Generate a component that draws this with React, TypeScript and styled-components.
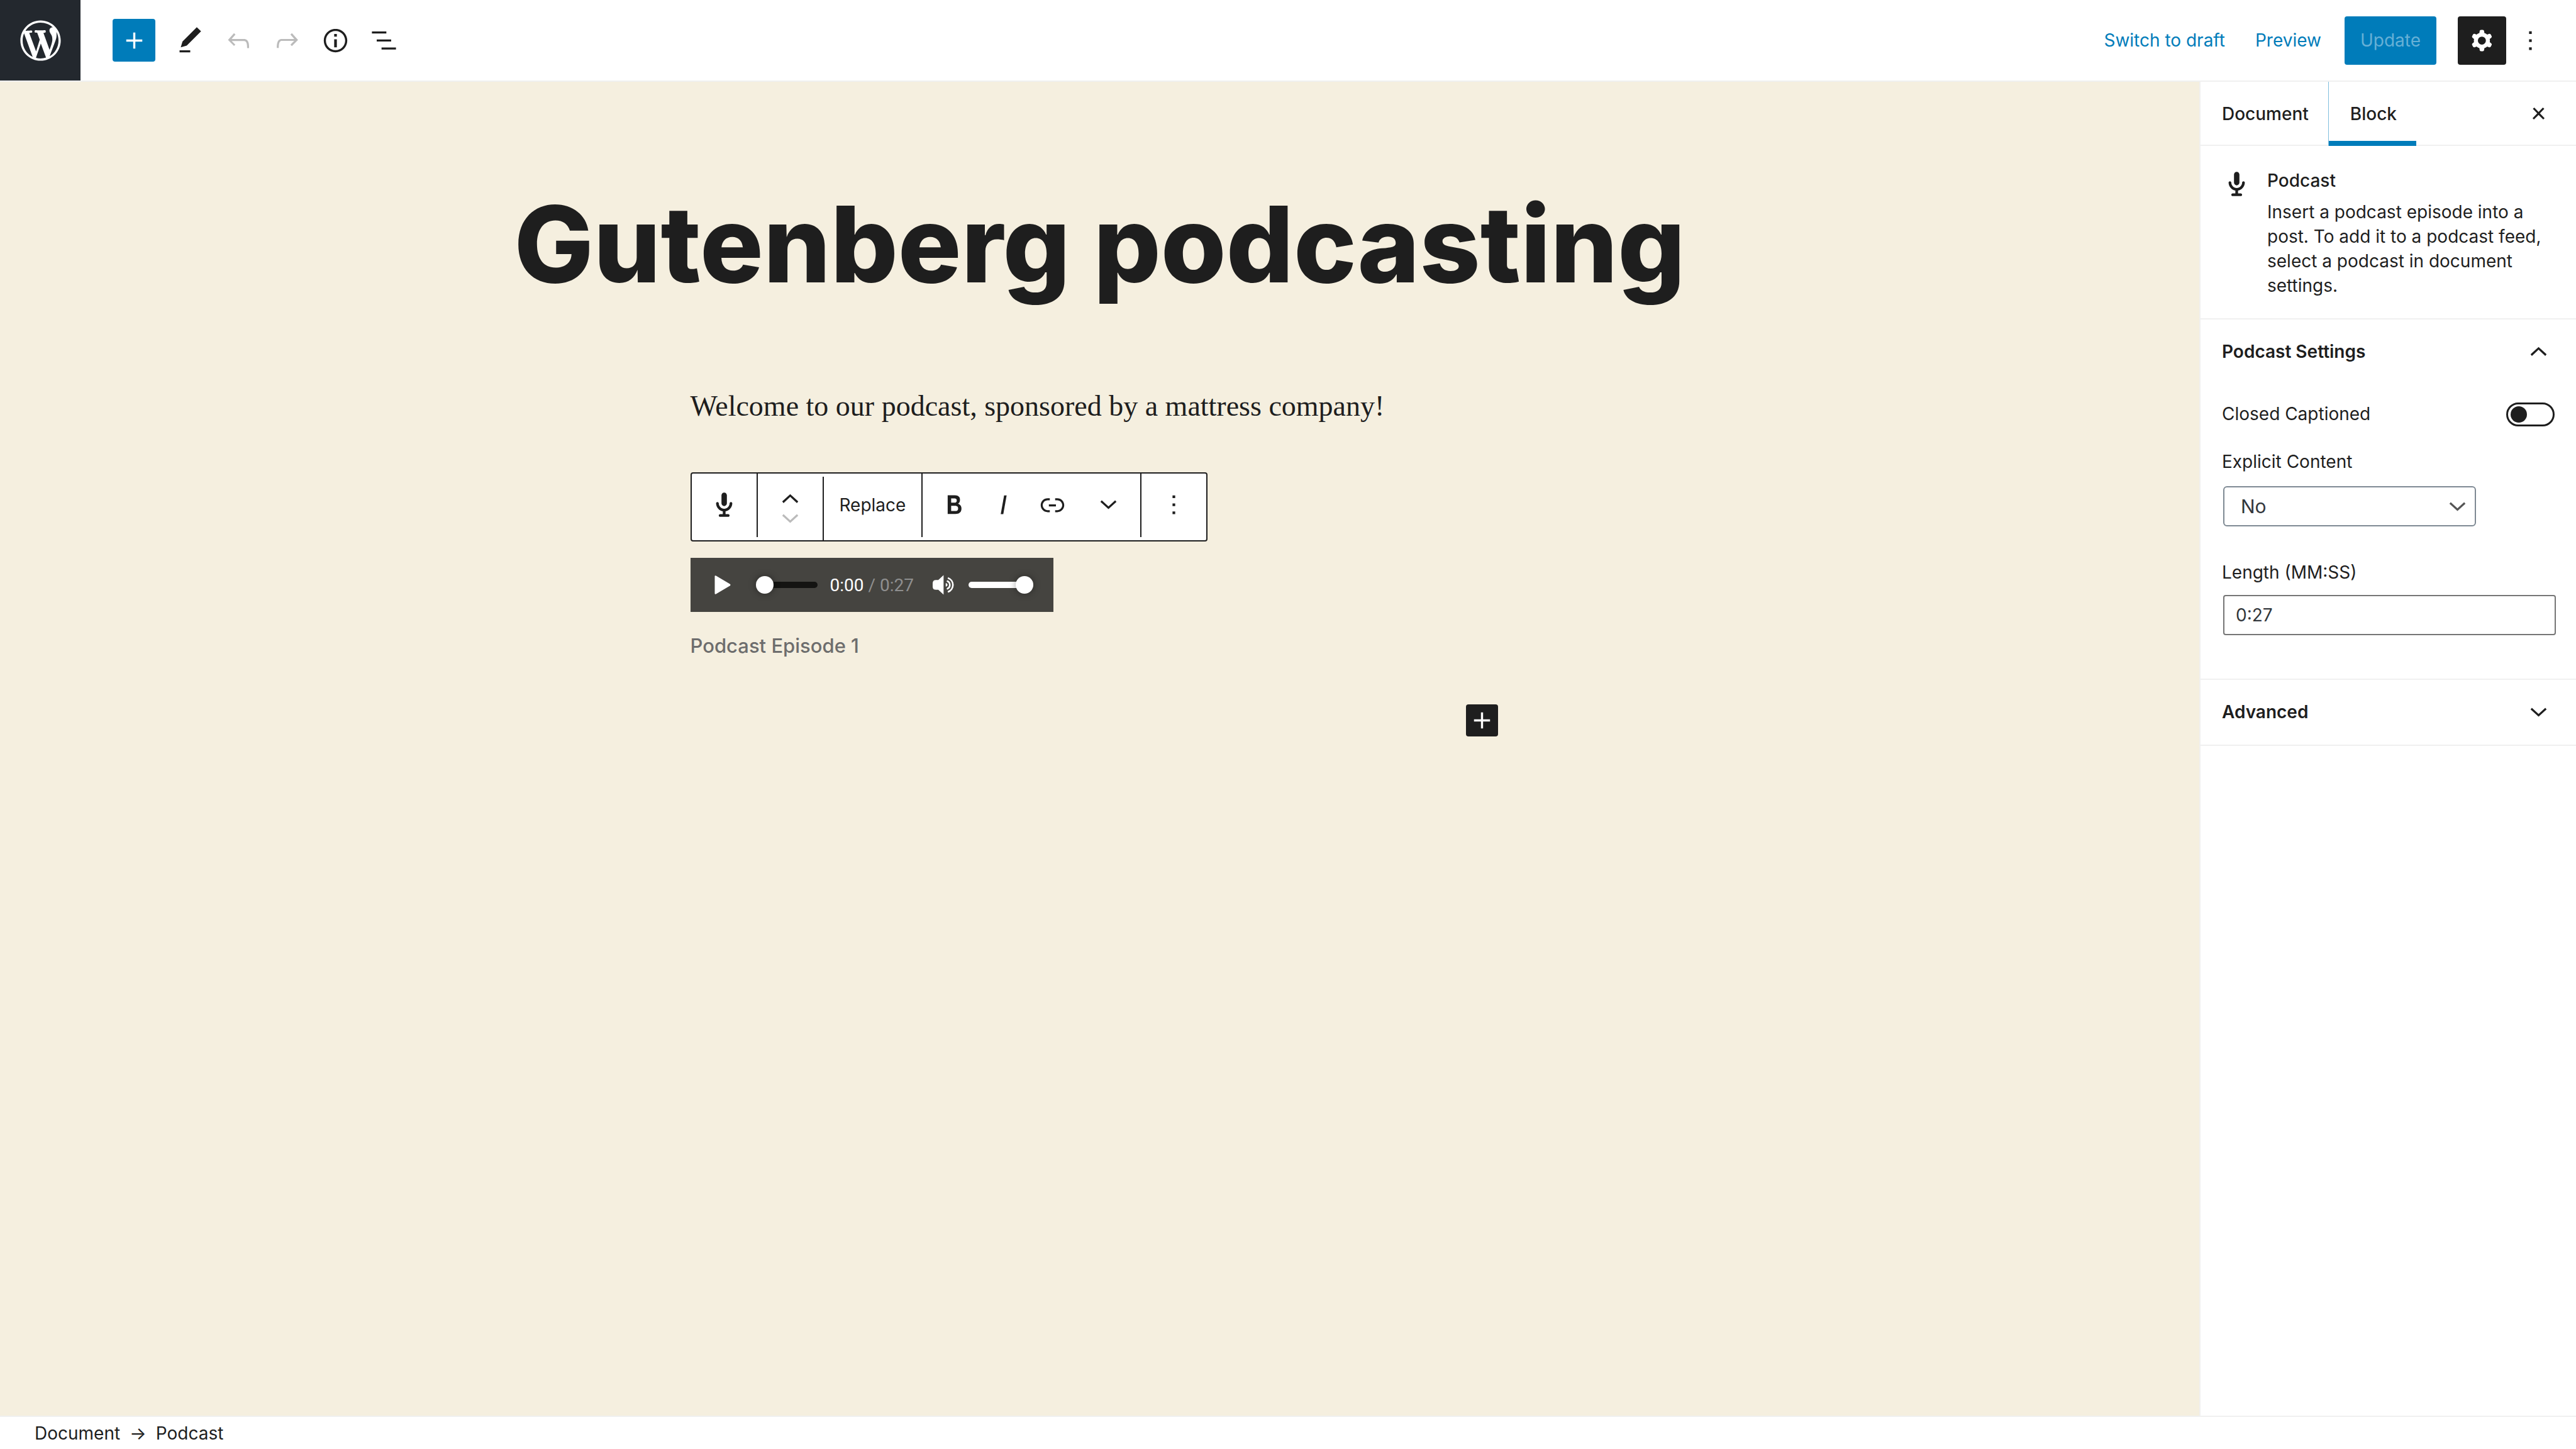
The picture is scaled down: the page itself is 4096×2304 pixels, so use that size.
import React, { useState } from 'react';
import styled, { createGlobalStyle, css } from 'styled-components';

const ink = '#1e1e1e';
const blue = '#007cba';
const line = '#f0f0f0';

const Global = createGlobalStyle`
  *, *::before, *::after { box-sizing: border-box; }
  html, body, #root { height: 100%; }
  body { margin: 0; background: #fff; }
  body, button, input, select {
    font-family: Inter, 'Liberation Sans', sans-serif;
    font-size: 28px;
    line-height: 39px;
    color: ${ink};
  }
  button { border: 0; padding: 0; background: none; cursor: pointer; }
  h1, h2, h3, p, figure { margin: 0; }
`;

const Shell = styled.div`
  display: grid;
  grid-template-rows: auto 1fr auto;
  min-height: 100vh;
`;

const Icon = styled.svg<{ $size?: number }>`
  display: block;
  flex: none;
  width: ${p => p.$size ?? 51}px;
  height: ${p => p.$size ?? 51}px;
  fill: currentColor;
`;

/* Header */
const Header = styled.header`
  display: flex;
  align-items: center;
  justify-content: space-between;
  height: 130px;
  border-bottom: 2px solid ${line};
`;

const HeaderTools = styled.div`
  display: flex;
  align-items: center;
  height: 100%;
`;

const HomeLink = styled.a`
  display: grid;
  place-items: center;
  width: 128px;
  height: 128px;
  margin-right: 51px;
  background: #23282e;
  color: #fff;
`;

const InsertButton = styled.button`
  display: grid;
  place-items: center;
  width: 68px;
  height: 68px;
  margin-right: 17px;
  border-radius: 4px;
  background: ${blue};
  color: #fff;
`;

const ToolButton = styled.button`
  display: grid;
  place-items: center;
  width: 77px;
  height: 77px;
  color: ${ink};
  &:disabled { color: #bbb; }
`;

const HeaderActions = styled.div`
  display: flex;
  align-items: center;
  padding-right: 47px;
`;

const TextButton = styled.button`
  padding: 0 24px;
  color: ${blue};
`;

const UpdateButton = styled.button`
  height: 77px;
  margin: 0 34px 0 13px;
  padding: 0 25px;
  border-radius: 4px;
  background: ${blue};
  &:disabled { color: #66b0d6; }
`;

const SettingsButton = styled(ToolButton)`
  margin-right: 13px;
  border-radius: 4px;
  background: ${ink};
  color: #fff;
`;

const MoreButton = styled.button`
  display: grid;
  place-items: center;
`;

/* Canvas */
const Body = styled.div`
  display: grid;
  grid-template-columns: 1fr 599px;
`;

const Canvas = styled.main`
  background: #f5efdf;
  padding-top: 146px;
`;

const Title = styled.h1`
  font-size: 168px;
  font-weight: 800;
  line-height: 224px;
  text-align: center;
`;

const Column = styled.div`
  display: flex;
  flex-direction: column;
  align-items: flex-start;
  width: 1302px;
  max-width: 100%;
  margin: 106px auto 0;
`;

const Paragraph = styled.p`
  font-family: 'Liberation Serif', serif;
  font-size: 46px;
  line-height: 80px;
  margin-bottom: 65px;
`;

const BlockToolbar = styled.div`
  display: flex;
  height: 110px;
  margin-bottom: 26px;
  border: 2px solid ${ink};
  border-radius: 4px;
  background: #fff;
`;

const Group = styled.div<{ $low?: boolean; $last?: boolean; $inset?: boolean }>`
  display: flex;
  height: 101px;
  padding-left: ${p => (p.$inset ? 11 : 0)}px;
  border-right: ${p => (p.$last ? 0 : 2)}px solid ${ink};
  ${p => p.$low && css`align-self: flex-end;`}
`;

const BlockButton = styled.button<{ $width: number }>`
  display: grid;
  place-items: center;
  width: ${p => p.$width}px;
  height: 98px;
`;

const ReplaceButton = styled.button`
  height: 100px;
  padding: 0 25px;
`;

const Movers = styled.div`
  display: flex;
  flex-direction: column;
  justify-content: center;
  width: 103px;
`;

const Mover = styled.button`
  display: flex;
  align-items: center;
  justify-content: center;
  height: 31px;
  &:disabled { color: #bbb; }
`;

const Player = styled.div`
  display: flex;
  align-items: center;
  width: 577px;
  height: 86px;
  margin-bottom: 34px;
  padding: 0 32px 0 36px;
  background: #454440;
  color: #fff;
`;

const PlayButton = styled.button`
  color: #fff;
  margin-right: 38px;
`;

const Slider = styled.input<{ $width: number; $track: string }>`
  appearance: none;
  width: ${p => p.$width}px;
  height: 28px;
  margin: 0;
  background: none;
  &::-webkit-slider-runnable-track {
    height: 10px;
    border-radius: 5px;
    background: ${p => p.$track};
  }
  &::-webkit-slider-thumb {
    appearance: none;
    width: 28px;
    height: 28px;
    margin-top: -9px;
    border-radius: 50%;
    background: #fff;
    box-shadow: 0 0 12px rgba(0, 0, 0, 0.4);
  }
`;

const Time = styled.span`
  flex: 1;
  margin-left: 20px;
  font-family: Roboto, sans-serif;
  white-space: nowrap;
`;

const Remaining = styled.span`
  color: #8f8f8f;
`;

const MuteButton = styled.button`
  margin-right: 23px;
  color: #fff;
`;

const Wave = styled.path`
  fill: none;
  stroke: currentColor;
  stroke-width: 15;
`;

const Caption = styled.p`
  font-size: 31px;
  font-weight: 500;
  line-height: 40px;
  color: #6d6d6d;
`;

const Appender = styled.button`
  display: grid;
  place-items: center;
  align-self: flex-end;
  width: 51px;
  height: 51px;
  margin: 73px 18px 0 0;
  border-radius: 4px;
  background: ${ink};
  color: #fff;
`;

/* Sidebar */
const Sidebar = styled.aside`
  border-left: 2px solid ${line};
  background: #fff;
`;

const Tabs = styled.div`
  display: flex;
  height: 102px;
  border-bottom: 2px solid ${line};
`;

const Tab = styled.button<{ $active?: boolean }>`
  height: 102px;
  padding: 0 31px 0 34px;
  font-weight: 500;
  ${p => p.$active && css`
    border-left: 1px solid #80bedd;
    box-shadow: inset 0 -8px ${blue};
  `}
`;

const CloseButton = styled.button`
  margin: 0 34px 0 auto;
`;

const Card = styled.section`
  display: flex;
  gap: 27px;
  height: 276px;
  padding: 35px 34px 0 36px;
  border-bottom: 2px solid ${line};
`;

const CardIcon = styled.span`
  padding-top: 4px;
`;

const CardTitle = styled.h2`
  font-size: 28px;
  font-weight: 500;
  line-height: 40px;
  margin-bottom: 11px;
`;

const Panel = styled.section<{ $open?: boolean }>`
  height: ${p => (p.$open ? 573 : 105)}px;
  border-bottom: 2px solid ${line};
`;

const PanelToggle = styled.button`
  display: flex;
  align-items: center;
  justify-content: space-between;
  width: 100%;
  height: 103px;
  padding: 0 34px;
  font-weight: 600;
`;

const Field = styled.div`
  display: flex;
  flex-direction: column;
  padding: 0 32px 0 34px;
`;

const ToggleRow = styled.div`
  display: flex;
  align-items: center;
  justify-content: space-between;
  margin: 28px 34px 37px;
`;

const Switch = styled.input`
  appearance: none;
  display: flex;
  align-items: center;
  width: 77px;
  height: 38px;
  margin: 0;
  padding: 0 4px;
  border: 3px solid ${ink};
  border-radius: 19px;
  background: #fff;
  &::before {
    content: '';
    width: 26px;
    height: 26px;
    border-radius: 50%;
    background: ${ink};
  }
  &:checked { justify-content: flex-end; }
`;

const SelectBox = styled.div`
  display: grid;
  align-items: center;
  width: 402px;
  margin: 19px 0 54px 2px;
  > * { grid-area: 1 / 1; }
  > svg { justify-self: end; margin-right: 4px; color: #555; pointer-events: none; }
`;

const Select = styled.select`
  appearance: none;
  height: 64px;
  padding: 0 28px 0 26px;
  border: 2px solid #7e8993;
  border-radius: 6px;
  background: #fff;
  font-size: 30px;
  color: #32373c;
`;

const TextInput = styled.input`
  height: 64px;
  margin: 16px 0 0 2px;
  padding: 0 18px;
  border: 2px solid #757575;
  border-radius: 4px;
  font-size: 28px;
  color: #32373c;
`;

/* Footer */
const Footer = styled.nav`
  display: flex;
  align-items: center;
  gap: 15px;
  height: 53px;
  padding: 1px 55px 0;
  border-top: 2px solid ${line};
`;

const paths = {
  plus: 'M18 11.2h-5.2V6h-1.6v5.2H6v1.6h5.2V18h1.6v-5.2H18z',
  edit: 'M20.1 5.1L16.9 2 6.2 12.7l-1.3 4.4 4.5-1.3L20.1 5.1zM4 20.8h8v-1.5H4v1.5z',
  undo: 'M18.3 11.7c-.6-.6-1.4-.9-2.3-.9H6.7l2.9-3.3-1.1-1-4.5 5L8.5 16l1-1-2.7-2.7H16c.5 0 .9.2 1.3.5 1 1 1 3.4 1 4.5v.3h1.5v-.2c0-1.5 0-4.3-1.5-5.7z',
  redo: 'M15.6 6.5l-1.1 1 2.9 3.3H8c-.9 0-1.7.3-2.3.9-1.4 1.5-1.4 4.2-1.4 5.6v.2h1.5v-.3c0-1.1 0-3.5 1-4.5.3-.3.7-.5 1.3-.5h9.2L14.5 15l1.1 1.1 4.6-4.6-4.6-5z',
  info: 'M12 3.2c-4.8 0-8.8 3.9-8.8 8.8 0 4.8 3.9 8.8 8.8 8.8 4.8 0 8.8-3.9 8.8-8.8 0-4.8-4-8.8-8.8-8.8zm0 16c-4 0-7.2-3.3-7.2-7.2C4.8 8 8 4.8 12 4.8s7.2 3.3 7.2 7.2c0 4-3.2 7.2-7.2 7.2zM11 17h2v-6h-2v6zm0-8h2V7h-2v2z',
  list: 'M13.8 5.2H3v1.5h10.8V5.2zm-3.6 12v1.5H21v-1.5H10.2zm7.2-6H6.6v1.5h10.8v-1.5z',
  cog: 'M10.289 4.836A1 1 0 0111.275 4h1.306a1 1 0 01.987.836l.244 1.466c.787.26 1.503.679 2.108 1.218l1.393-.522a1 1 0 011.216.437l.653 1.13a1 1 0 01-.23 1.273l-1.148.944a6.025 6.025 0 010 2.435l1.149.946a1 1 0 01.23 1.272l-.653 1.13a1 1 0 01-1.216.437l-1.394-.522c-.605.54-1.32.958-2.108 1.218l-.244 1.466a1 1 0 01-.987.836h-1.306a1 1 0 01-.986-.836l-.244-1.466a5.995 5.995 0 01-2.108-1.218l-1.394.522a1 1 0 01-1.217-.436l-.653-1.131a1 1 0 01.23-1.272l1.149-.946a6.026 6.026 0 010-2.435l-1.148-.944a1 1 0 01-.23-1.272l.653-1.131a1 1 0 011.217-.437l1.393.522a5.994 5.994 0 012.108-1.218l.244-1.466zM14.929 12a3 3 0 11-6 0 3 3 0 016 0z',
  more: 'M13 19h-2v-2h2v2zm0-6h-2v-2h2v2zm0-6h-2V5h2v2z',
  close: 'M13 11.9l3.3-3.4-1.1-1-3.2 3.3-3.2-3.3-1.1 1 3.3 3.4-3.5 3.6 1 1L12 13l3.5 3.5 1-1z',
  bold: 'M14.7 11.3c1-.6 1.5-1.6 1.5-3 0-2.3-1.3-3.4-4-3.4H7v14h5.8c1.4 0 2.5-.3 3.3-1 .8-.7 1.2-1.7 1.2-2.9.1-1.9-.8-3.1-2.6-3.7zm-5.1-4h2.3c.6 0 1.1.1 1.4.4.3.3.5.7.5 1.2s-.2 1-.5 1.2c-.3.3-.8.4-1.4.4H9.6V7.3zm4.6 9c-.4.3-1 .4-1.7.4H9.6v-3.9h2.9c.7 0 1.3.2 1.7.5.4.3.6.8.6 1.5s-.2 1.2-.6 1.5z',
  italic: 'M12.5 5L10 19h1.9l2.5-14z',
  link: 'M15.6 7.2H14v1.5h1.6c2 0 3.7 1.7 3.7 3.7s-1.7 3.7-3.7 3.7H14v1.5h1.6c2.8 0 5.2-2.3 5.2-5.2 0-2.9-2.3-5.2-5.2-5.2zM4.7 12.4c0-2 1.7-3.7 3.7-3.7H10V7.2H8.4c-2.9 0-5.2 2.3-5.2 5.2 0 2.9 2.3 5.2 5.2 5.2H10v-1.5H8.4c-2 0-3.7-1.7-3.7-3.7zm4.6.9h5.3v-1.5H9.3v1.5z',
  up: 'M12 8.4l6 5.4-1 1.2-5-4.6-5 4.600-1-1.200z',
  down: 'M12 15.300l6-5.400-1-1.200-5 4.600-5-4.600-1 1.200z',
};

const Glyph = ({ name, size }: { name: keyof typeof paths; size?: number }) => (
  <Icon viewBox="0 0 24 24" $size={size} aria-hidden="true">
    <path fillRule="evenodd" d={paths[name]} />
  </Icon>
);

const Microphone = () => (
  <Icon viewBox="0 0 20 20" $size={43} aria-hidden="true">
    <path d="M12 9V3c0-1.1-.89-2-2-2-1.12 0-2 .94-2 2v6c0 1.1.9 2 2 2 1.13 0 2-.94 2-2zm4 0c0 2.97-2.16 5.43-5 5.91V17h2c.56 0 1 .45 1 1s-.44 1-1 1H7c-.55 0-1-.45-1-1s.45-1 1-1h2v-2.09C6.17 14.43 4 11.97 4 9c0-.55.45-1 1-1 .56 0 1 .45 1 1 0 2.21 1.8 4 4 4 2.21 0 4-1.79 4-4 0-.55.45-1 1-1 .56 0 1 .45 1 1z" />
  </Icon>
);

export default function App() {
  const [captioned, setCaptioned] = useState(false);
  return (
    <Shell>
      <Global />
      <Header>
        <HeaderTools>
          <HomeLink href="#" aria-label="View posts">
            <Icon viewBox="-2 -2 24 24" $size={77} aria-hidden="true">
              <path d="M20 10c0-5.51-4.49-10-10-10C4.48 0 0 4.49 0 10c0 5.52 4.48 10 10 10 5.51 0 10-4.48 10-10zM7.78 15.37L4.37 6.22c.55-.02 1.17-.08 1.17-.08.5-.06.44-1.13-.06-1.11 0 0-1.45.11-2.37.11-.18 0-.37 0-.58-.01C4.12 2.69 6.87 1.11 10 1.11c2.33 0 4.45.87 6.05 2.34-.68-.11-1.65.39-1.65 1.58 0 .74.45 1.36.9 2.1.35.61.55 1.36.55 2.46 0 1.49-1.4 5-1.4 5l-3.03-8.37c.54-.02.82-.17.82-.17.5-.05.44-1.25-.06-1.22 0 0-1.44.12-2.38.12-.87 0-2.33-.12-2.33-.12-.5-.03-.56 1.2-.06 1.22l.92.08 1.26 3.41zM17.41 10c.24-.64.74-1.87.43-4.25.7 1.29 1.05 2.71 1.05 4.25 0 3.29-1.73 6.24-4.4 7.78.97-2.59 1.94-5.2 2.92-7.78zM6.1 18.09C3.12 16.65 1.11 13.53 1.11 10c0-1.3.23-2.48.72-3.59C3.25 10.3 4.67 14.2 6.1 18.09zm4.03-6.63l2.58 6.98c-.86.29-1.76.45-2.71.45-.79 0-1.57-.11-2.29-.33.81-2.38 1.62-4.74 2.42-7.1z" />
            </Icon>
          </HomeLink>
          <InsertButton aria-label="Add block"><Glyph name="plus" /></InsertButton>
          <ToolButton aria-label="Modes"><Glyph name="edit" /></ToolButton>
          <ToolButton aria-label="Undo" disabled><Glyph name="undo" /></ToolButton>
          <ToolButton aria-label="Redo" disabled><Glyph name="redo" /></ToolButton>
          <ToolButton aria-label="Content structure"><Glyph name="info" /></ToolButton>
          <ToolButton aria-label="Block navigation"><Glyph name="list" /></ToolButton>
        </HeaderTools>
        <HeaderActions>
          <TextButton>Switch to draft</TextButton>
          <TextButton>Preview</TextButton>
          <UpdateButton disabled>Update</UpdateButton>
          <SettingsButton aria-label="Settings"><Glyph name="cog" /></SettingsButton>
          <MoreButton aria-label="More tools and options"><Glyph name="more" /></MoreButton>
        </HeaderActions>
      </Header>

      <Body>
        <Canvas>
          <Title>Gutenberg podcasting</Title>
          <Column>
            <Paragraph>Welcome to our podcast, sponsored by a mattress company!</Paragraph>
            <BlockToolbar role="toolbar" aria-label="Block tools">
              <Group>
                <BlockButton $width={103} aria-label="Podcast"><Microphone /></BlockButton>
              </Group>
              <Group $low>
                <Movers>
                  <Mover aria-label="Move up"><Glyph name="up" /></Mover>
                  <Mover aria-label="Move down" disabled><Glyph name="down" /></Mover>
                </Movers>
              </Group>
              <Group>
                <ReplaceButton>Replace</ReplaceButton>
              </Group>
              <Group $inset>
                <BlockButton $width={78} aria-label="Bold"><Glyph name="bold" /></BlockButton>
                <BlockButton $width={78} aria-label="Italic"><Glyph name="italic" /></BlockButton>
                <BlockButton $width={78} aria-label="Link"><Glyph name="link" /></BlockButton>
                <BlockButton $width={101} aria-label="More rich text controls"><Glyph name="down" /></BlockButton>
              </Group>
              <Group $last>
                <BlockButton $width={103} aria-label="More options"><Glyph name="more" /></BlockButton>
              </Group>
            </BlockToolbar>
            <Player>
              <PlayButton aria-label="Play">
                <Icon viewBox="0 0 25 30" $size={30} aria-hidden="true">
                  <path d="M0 1.5Q0-.5 2 .5L24 13.500Q26 15 24 16.500L2 29.500Q0 30.500 0 28.500z" />
                </Icon>
              </PlayButton>
              <Slider type="range" aria-label="Seek" $width={98} $track="#141412" min={0} max={27} defaultValue={0} />
              <Time>0:00 <Remaining>/ 0:27</Remaining></Time>
              <MuteButton aria-label="Mute">
                <Icon viewBox="0 0 190 190" $size={34} aria-hidden="true">
                  <path d="M97 8V182L50 139H30Q0 139 0 110V81Q0 52 30 52H50Z" />
                  <path d="M116 80q16 2 16 15t-16 15z" />
                  <Wave d="M126 60A37 37 0 0 1 126 131" />
                  <Wave d="M135 33A66 66 0 0 1 135 158" />
                </Icon>
              </MuteButton>
              <Slider type="range" aria-label="Volume" $width={103} $track="#fff" min={0} max={100} defaultValue={100} />
            </Player>
            <Caption>Podcast Episode 1</Caption>
            <Appender aria-label="Add block"><Glyph name="plus" /></Appender>
          </Column>
        </Canvas>

        <Sidebar>
          <Tabs>
            <Tab>Document</Tab>
            <Tab $active>Block</Tab>
            <CloseButton aria-label="Close settings"><Glyph name="close" /></CloseButton>
          </Tabs>
          <Card>
            <CardIcon><Microphone /></CardIcon>
            <div>
              <CardTitle>Podcast</CardTitle>
              <p>Insert a podcast episode into a post. To add it to a podcast feed, select a podcast in document settings.</p>
            </div>
          </Card>
          <Panel $open>
            <PanelToggle aria-expanded="true">Podcast Settings<Glyph name="up" /></PanelToggle>
            <ToggleRow>
              <label htmlFor="captioned">Closed Captioned</label>
              <Switch id="captioned" type="checkbox" checked={captioned} onChange={e => setCaptioned(e.target.checked)} />
            </ToggleRow>
            <Field>
              <label htmlFor="explicit">Explicit Content</label>
              <SelectBox>
                <Select id="explicit" defaultValue="No">
                  <option>No</option>
                  <option>Yes</option>
                </Select>
                <Glyph name="down" />
              </SelectBox>
            </Field>
            <Field>
              <label htmlFor="length">Length (MM:SS)</label>
              <TextInput id="length" type="text" defaultValue="0:27" />
            </Field>
          </Panel>
          <Panel>
            <PanelToggle aria-expanded="false">Advanced<Glyph name="down" /></PanelToggle>
          </Panel>
        </Sidebar>
      </Body>

      <Footer aria-label="Block breadcrumb">
        <span>Document</span>
        <span>→</span>
        <span>Podcast</span>
      </Footer>
    </Shell>
  );
}
